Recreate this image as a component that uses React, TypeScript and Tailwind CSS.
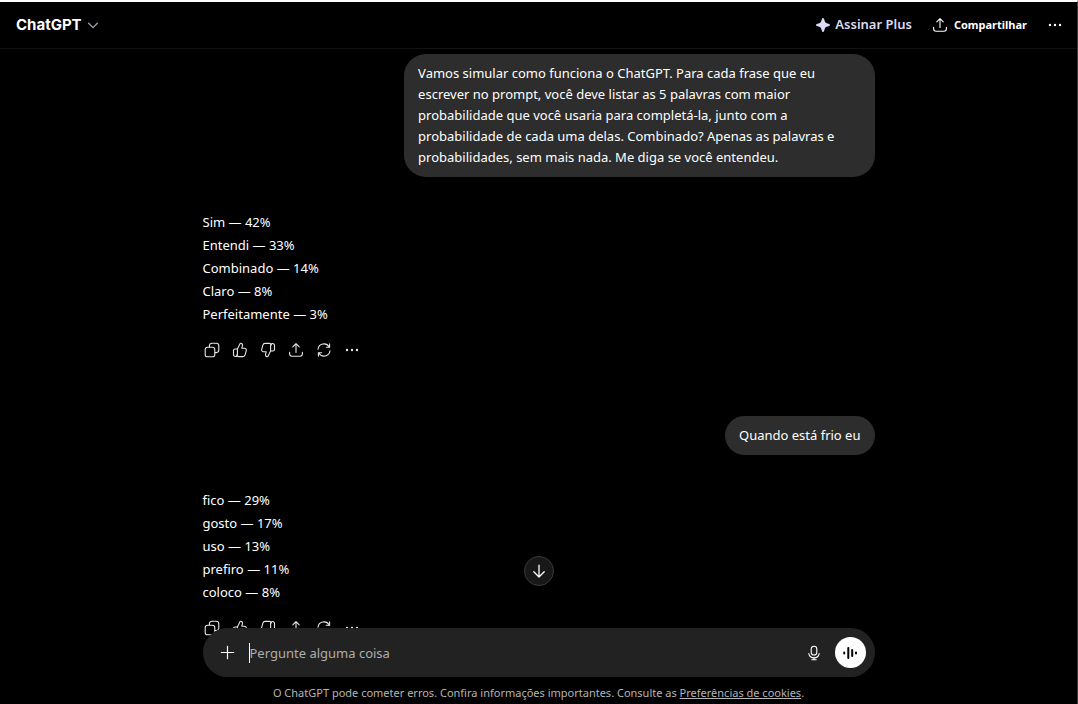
import { useState } from 'react';
import type { ReactNode } from 'react';

type Word = { text: string; prob: string };

const firstAnswer: Word[] = [
  { text: 'Sim', prob: '42%' },
  { text: 'Entendi', prob: '33%' },
  { text: 'Combinado', prob: '14%' },
  { text: 'Claro', prob: '8%' },
  { text: 'Perfeitamente', prob: '3%' },
];

const secondAnswer: Word[] = [
  { text: 'fico', prob: '29%' },
  { text: 'gosto', prob: '17%' },
  { text: 'uso', prob: '13%' },
  { text: 'prefiro', prob: '11%' },
  { text: 'coloco', prob: '8%' },
];

function Icon({ children, className = 'size-4' }: { children: ReactNode; className?: string }) {
  return (
    <svg
      viewBox="0 0 16 16" fill="none" stroke="currentColor" strokeWidth="1.1"
      strokeLinecap="round" strokeLinejoin="round" aria-hidden="true"
      className={`shrink-0 ${className}`}
    >
      {children}
    </svg>
  );
}

function CopyIcon() {
  return (
    <Icon>
      <rect x="1.2" y="5.2" width="9.6" height="9.6" rx="2.4" />
      <path d="M5.4 5V3.7A2.5 2.5 0 0 1 7.9 1.2h4.4a2.5 2.5 0 0 1 2.5 2.5v4.4a2.5 2.5 0 0 1-2.5 2.5H11" />
    </Icon>
  );
}

function ThumbPaths() {
  return (
    <>
      <path d="M5.4 7 8 1.8c.2-.4.5-.6.9-.5 1.2.2 1.8 1.2 1.5 2.5l-.6 2.4h2.6c1.4 0 2.3 1.2 1.9 2.5l-1.2 4.2c-.3 1-1.1 1.7-2.2 1.7H6.8c-1.1 0-1.9-.6-2.2-1.5" />
      <path d="M5.4 7v5.4a2.1 2.1 0 0 1-2.1 2.1 1.8 1.8 0 0 1-1.8-1.8V8.6c0-1 .7-1.6 1.6-1.6h2.3Z" />
    </>
  );
}

function ShareIcon() {
  return (
    <Icon>
      <path d="M8 10.4V1.8M4.8 4.8 8 1.6l3.2 3.2" />
      <path d="M1.6 10.4v1.3a2.5 2.5 0 0 0 2.5 2.5h7.8a2.5 2.5 0 0 0 2.5-2.5v-1.3" />
    </Icon>
  );
}

function RetryIcon() {
  return (
    <Icon>
      <path d="M2 7.2A6 6 0 0 1 13.2 5M14 8.8A6 6 0 0 1 2.8 11" />
      <path d="M13.6 1.9V5.2h-3.3M2.4 14.1v-3.3h3.3" />
    </Icon>
  );
}

function DotsIcon() {
  return (
    <Icon>
      <g fill="currentColor" stroke="none">
        <circle cx="3" cy="8" r="1.2" />
        <circle cx="8" cy="8" r="1.2" />
        <circle cx="13" cy="8" r="1.2" />
      </g>
    </Icon>
  );
}

function ActionButton({ label, children }: { label: string; children: ReactNode }) {
  return (
    <button type="button" aria-label={label} className="flex size-7 items-center justify-center rounded-lg hover:bg-white/10">
      {children}
    </button>
  );
}

function Answer({ words }: { words: Word[] }) {
  return (
    <div className="mt-[34px]">
      <div className="leading-[23px]">
        {words.map(w => (
          <p key={w.text}>{w.text} — {w.prob}</p>
        ))}
      </div>
      <div className="-ml-[5px] mt-[10px] flex text-[#e8e8e8]">
        <ActionButton label="Copiar"><CopyIcon /></ActionButton>
        <ActionButton label="Boa resposta"><Icon><ThumbPaths /></Icon></ActionButton>
        <ActionButton label="Resposta ruim"><Icon className="size-4 rotate-180"><ThumbPaths /></Icon></ActionButton>
        <ActionButton label="Compartilhar resposta"><ShareIcon /></ActionButton>
        <ActionButton label="Tentar novamente"><RetryIcon /></ActionButton>
        <ActionButton label="Mais ações"><DotsIcon /></ActionButton>
      </div>
    </div>
  );
}

function Question({ children }: { children: ReactNode }) {
  return (
    <div className="flex justify-end">
      <p className="max-w-[70%] rounded-[22px] bg-[#2d2d2d] px-[14px] py-[9px] leading-[21px]">{children}</p>
    </div>
  );
}

export default function App() {
  const [prompt, setPrompt] = useState('');

  return (
    <div className="flex h-screen flex-col overflow-hidden border-t-2 border-r border-t-white border-r-[#3a3a3a] bg-black font-['Noto_Sans','Open_Sans',sans-serif] text-[13px] text-white">
      <header className="flex h-[47px] shrink-0 items-center justify-between border-b border-[#121212] pr-[14px] pl-4">
        <button type="button" className="flex items-center gap-1 font-['Inter',sans-serif] text-[15px] font-bold text-white">
          ChatGPT
          <Icon className="size-3.5 text-[#a8a8a8]"><path d="m3 6 5 5 5-5" strokeWidth="1.4" /></Icon>
        </button>
        <div className="flex items-center gap-5 font-semibold">
          <button type="button" className="flex items-center gap-1 text-[#dcdbf6]">
            <svg viewBox="0 0 16 16" fill="currentColor" aria-hidden="true" className="size-4">
              <path d="M8 1c.5 0 .8.3 1 .8l.8 2.5c.3.9 1 1.6 1.9 1.9l2.5.8c.5.2.8.5.8 1s-.3.8-.8 1l-2.5.8c-.9.3-1.6 1-1.9 1.9L9 14.2c-.2.5-.5.8-1 .8s-.8-.3-1-.8l-.8-2.5c-.3-.9-1-1.6-1.9-1.9L1.8 9c-.5-.2-.8-.5-.8-1s.3-.8.8-1l2.5-.8c.9-.3 1.6-1 1.9-1.9L7 1.8c.2-.5.5-.8 1-.8Z" />
            </svg>
            Assinar Plus
          </button>
          <button type="button" className="flex items-center gap-1.5 text-[11px] font-bold text-white">
            <ShareIcon />
            Compartilhar
          </button>
          <button type="button" aria-label="Mais opções" className="text-white"><DotsIcon /></button>
        </div>
      </header>

      <div className="relative min-h-0 flex-1">
        <main className="h-full overflow-hidden">
          <div className="mx-auto flex max-w-2xl flex-col pt-[5px]">
            <Question>
              Vamos simular como funciona o ChatGPT. Para cada frase que eu escrever no prompt, você deve
              listar as 5 palavras com maior probabilidade que você usaria para completá-la, junto com a
              probabilidade de cada uma delas. Combinado? Apenas as palavras e probabilidades, sem mais
              nada. Me diga se você entendeu.
            </Question>
            <Answer words={firstAnswer} />
            <div className="mt-[52px]">
              <Question>Quando está frio eu</Question>
            </div>
            <Answer words={secondAnswer} />
          </div>
        </main>

        {/* compositor flutua sobre a conversa */}
        <div className="absolute inset-x-0 bottom-0 flex flex-col items-center">
          <button type="button" aria-label="Rolar para o fim" className="mb-[42px] flex size-[30px] items-center justify-center rounded-full border border-[#3a3a3a] bg-[#181818] text-white">
            <Icon><path d="M8 2.2v11.6M2.8 8.8 8 14l5.2-5.2" strokeWidth="1.3" /></Icon>
          </button>
          <form onSubmit={e => e.preventDefault()} className="flex h-[49px] w-full max-w-2xl items-center rounded-full bg-[#222] pr-[9px] pl-4">
            <button type="button" aria-label="Adicionar" className="mr-[13px] text-white">
              <Icon className="size-[17px]"><path d="M8 2.2v11.6M2.2 8h11.6" /></Icon>
            </button>
            <input
              type="text" value={prompt} autoFocus aria-label="Pergunte alguma coisa"
              onChange={e => setPrompt(e.target.value)}
              placeholder="Pergunte alguma coisa"
              className="h-5 min-w-0 flex-1 border-l border-white bg-transparent caret-transparent outline-none placeholder:text-[#adadad]"
            />
            <button type="button" aria-label="Ditar" className="mr-[13px] text-white">
              <Icon>
                <rect x="5.2" y="1.2" width="5.6" height="8.8" rx="2.8" />
                <path d="M2.8 8.6a5.3 5.3 0 0 0 10.4 0M8 12.6v2.2M5.8 14.8h4.4" />
              </Icon>
            </button>
            <button type="button" aria-label="Modo de voz" className="flex size-[31px] items-center justify-center rounded-full bg-white text-black">
              <Icon>
                <path d="M2.2 7.4v1.2M6.3 3v10M10.2 5v6M14 7.4v1.2" strokeWidth="2" />
              </Icon>
            </button>
          </form>
          <p className="w-full bg-black pt-2 pb-[3px] text-center text-[11px] leading-4 text-[#b4b4b4]">
            O ChatGPT pode cometer erros. Confira informações importantes. Consulte as{' '}
            <a href="#cookies" className="underline">Preferências de cookies</a>.
          </p>
        </div>
      </div>
    </div>
  );
}
